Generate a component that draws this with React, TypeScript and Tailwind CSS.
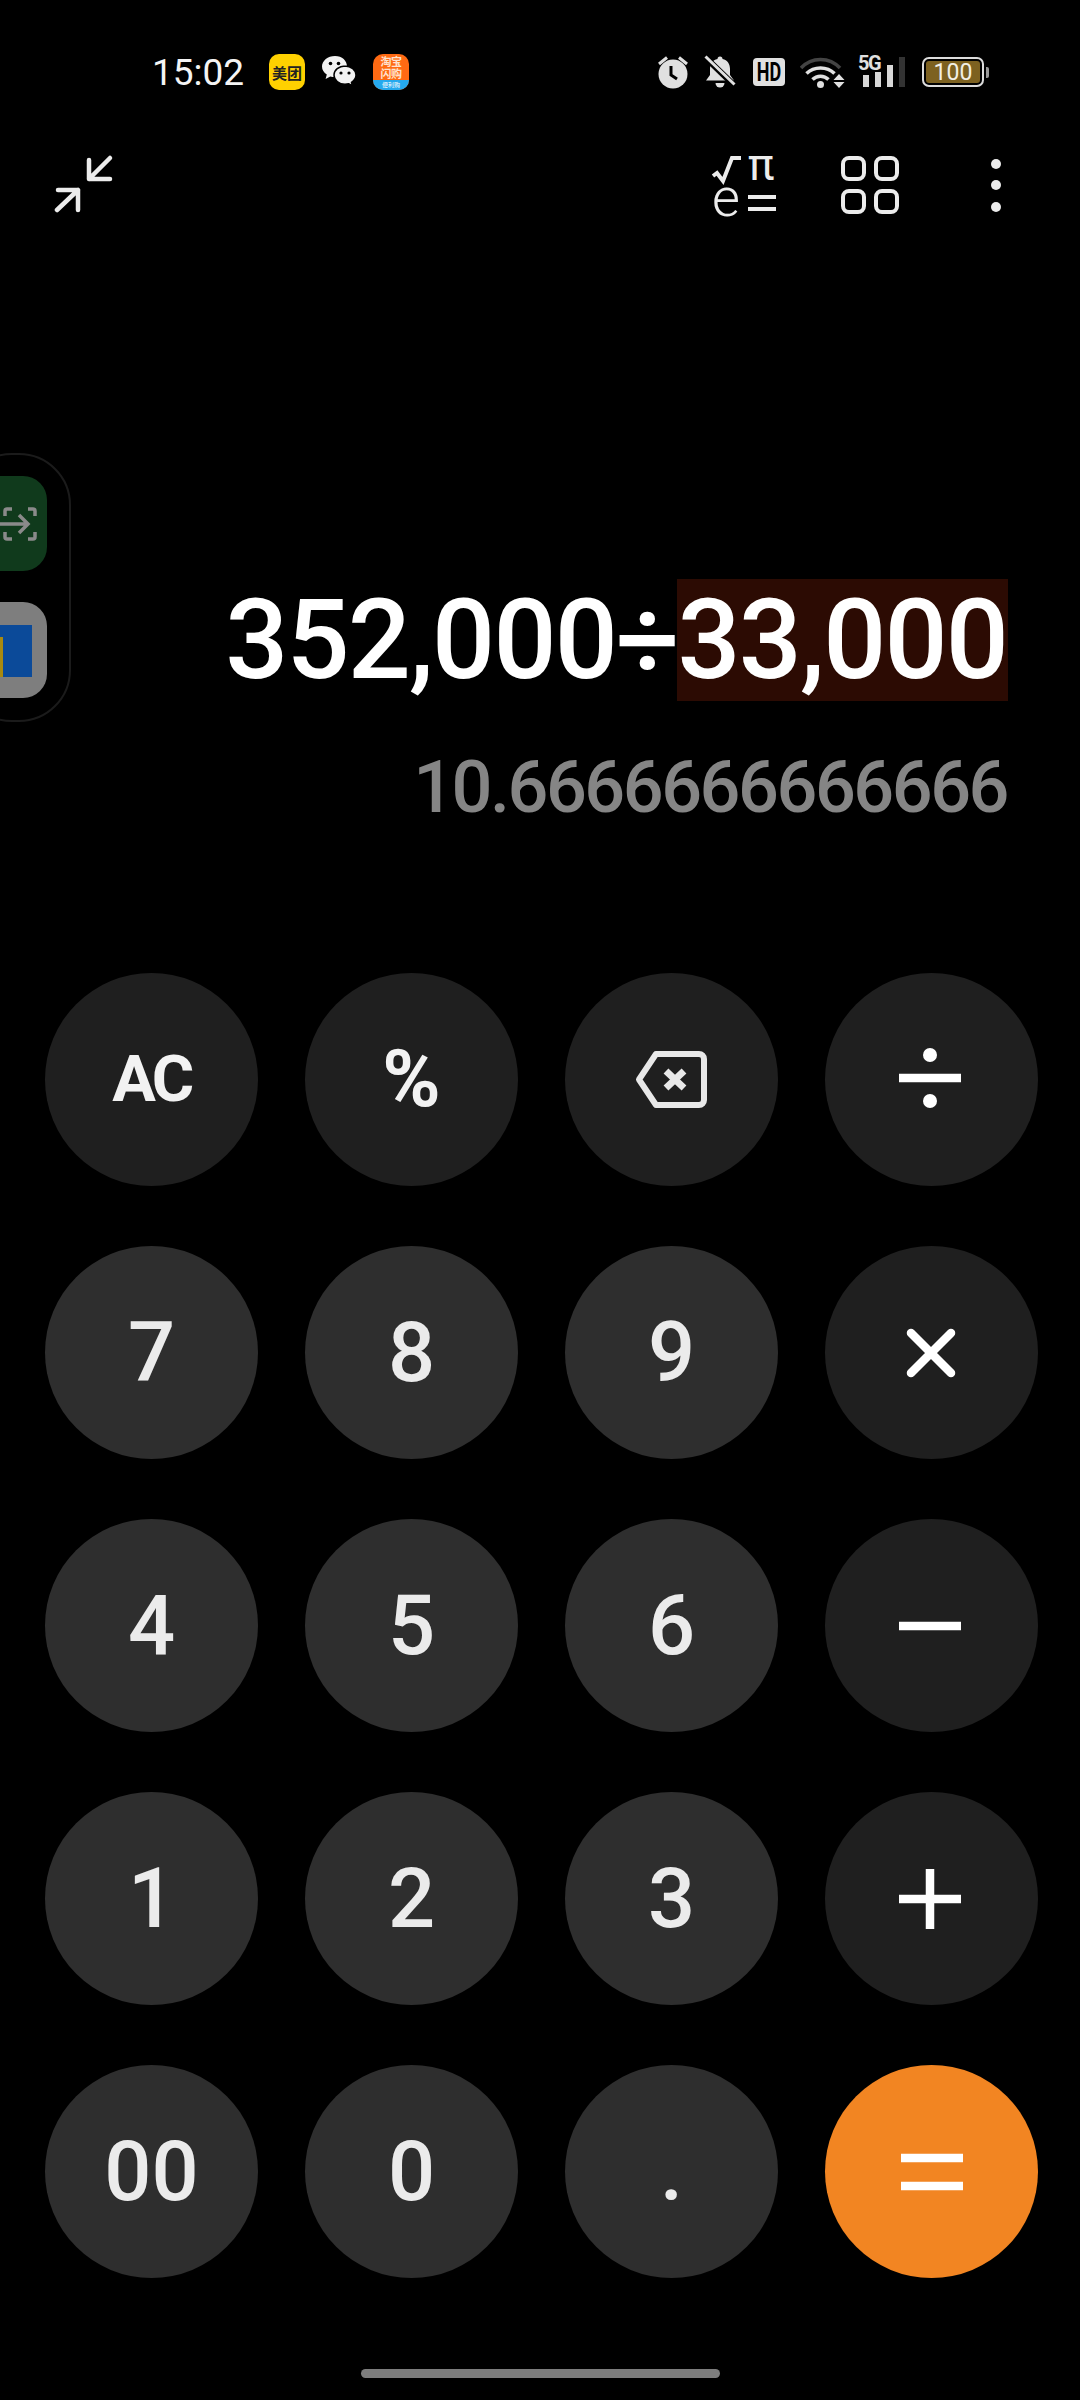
import React from "react";

const font = { fontFamily: "Roboto, 'Noto Sans CJK SC', sans-serif" };

function Meituan() {
  return (
    <div className="w-[36px] h-[36px] rounded-[10px] bg-[#ffd100] flex items-center justify-center text-[#222] text-[15px] leading-none font-bold whitespace-nowrap" style={{ fontFamily: "'Noto Sans CJK SC', sans-serif" }}>
      美团
    </div>
  );
}

function Wechat() {
  return (
    <svg width="34" height="32" viewBox="0 0 34 32" className="block">
      <path d="M13 0C5.8 0 0 4.7 0 10.5c0 3.3 1.9 6.2 4.8 8.1L3.6 23l4.7-2.6c1.5.4 3 .6 4.7.6 7.2 0 12-4.7 12-10.500C25 4.700 20.200 0 13 0z" fill="#f2f2f2" />
      <path d="M23 10c-6.100 0-11 4.100-11 9.100s4.900 9.100 11 9.100c1.300 0 2.600-.2 3.800-.5l3.700 2.300-1-3.700c2.700-1.700 4.500-4.300 4.500-7.200 0-5-4.900-9.100-11-9.100z" fill="#f2f2f2" stroke="#000" strokeWidth="1.500" />
      <circle cx="8.500" cy="7.500" r="1.800" fill="#000" />
      <circle cx="16.500" cy="7.500" r="1.800" fill="#000" />
      <circle cx="19" cy="17" r="1.600" fill="#000" />
      <circle cx="27" cy="17" r="1.600" fill="#000" />
    </svg>
  );
}

function Taobao() {
  return (
    <div className="w-[36px] h-[36px] rounded-[10px] overflow-hidden flex flex-col bg-[#ff6a13]" style={{ fontFamily: "'Noto Sans CJK SC', sans-serif" }}>
      <div className="h-[26px] flex flex-col items-center justify-center text-[#ffe3cf] text-[11px] leading-[12px] font-bold tracking-[-0.5px]">
        <span>淘宝</span>
        <span>闪购</span>
      </div>
      <div className="flex-1 bg-[#25a9ee] flex items-center justify-center text-[6px] leading-none text-white whitespace-nowrap">
        便利购
      </div>
    </div>
  );
}

function Alarm() {
  return (
    <svg width="32" height="34" viewBox="0 0 32 34" className="block">
      <circle cx="16" cy="19" r="14.500" fill="#e0e0e0" />
      <path d="M14 11v9l6 4" stroke="#000" strokeWidth="3" fill="none" />
      <path d="M2 9 10 2.500M30 9 22 2.500" stroke="#e0e0e0" strokeWidth="3" />
    </svg>
  );
}

function BellOff() {
  return (
    <svg width="32" height="34" viewBox="0 0 32 34" className="block">
      <path d="M16 1.500a2.500 2.500 0 0 1 2.500 2.500c5 1 7.500 5 7.500 10v6l4 5.500H2l4-5.500v-6c0-5 2.500-9 7.500-10A2.500 2.500 0 0 1 16 1.500z" fill="#e0e0e0" />
      <path d="M11.500 28h9a4.500 4.500 0 0 1-9 0z" fill="#e0e0e0" />
      <path d="M2 3l28 27" stroke="#000" strokeWidth="6" />
      <path d="M1.500 1.500l29 28" stroke="#e0e0e0" strokeWidth="3" />
    </svg>
  );
}

function HD() {
  return (
    <div className="w-[32px] h-[28px] rounded-[4px] bg-[#e0e0e0] flex items-center justify-center text-black text-[25px] leading-none font-bold">
      <span className="inline-block scale-x-[0.72]">HD</span>
    </div>
  );
}

function Wifi() {
  return (
    <svg width="46" height="34" viewBox="0 0 46 34" className="block">
      <path d="M1 13C11.500 1.500 29.500 1.500 40 13" stroke="#444" strokeWidth="3.500" fill="none" />
      <path d="M6.500 18.500C14 11 27 11 34.500 18.500" stroke="#e0e0e0" strokeWidth="3.500" fill="none" />
      <path d="M12.500 24.500C17 20 24 20 28.500 24.500" stroke="#e0e0e0" strokeWidth="3.500" fill="none" />
      <circle cx="20.500" cy="29.500" r="3.500" fill="#e0e0e0" />
      <path d="M39 19l5.500 6h-11zM39 33l5.500-6h-11z" fill="#e0e0e0" />
    </svg>
  );
}

function Signal() {
  return (
    <div className="relative w-[48px] h-[34px] flex items-end gap-[6px] pl-[5px] pb-[2px]">
      <div className="w-[6px] h-[12px] bg-[#d8d8d8]" />
      <div className="w-[6px] h-[15px] bg-[#d8d8d8]" />
      <div className="w-[6px] h-[22px] bg-[#d8d8d8]" />
      <div className="w-[6px] h-[30px] bg-[#333]" />
      <span className="absolute left-0 top-0 text-[#e0e0e0] text-[20px] leading-[17px] font-bold tracking-[-1.500px]">5G</span>
    </div>
  );
}

function Battery() {
  return (
    <div className="flex items-center gap-[2px]">
      <div className="w-[62px] h-[30px] rounded-[7px] border-2 border-[#dcdcdc] p-[2px] flex">
        <div className="flex-1 rounded-[3px] bg-[#7d6120] flex items-center justify-center text-[#f2efe5] text-[23px] leading-none">100</div>
      </div>
      <div className="w-[3px] h-[11px] rounded-r-[2px] bg-[#999]" />
    </div>
  );
}

function StatusBar() {
  return (
    <div className="h-[110px] pt-[34px] flex items-center pl-[152px] pr-[91px]">
      <span className="text-[37px] leading-none text-[#f4f4f4] w-[117px]">15:02</span>
      <div className="flex items-center">
        <Meituan />
        <div className="ml-[17px] mr-[17px]"><Wechat /></div>
        <Taobao />
      </div>
      <div className="flex-1" />
      <div className="flex items-center">
        <div className="mr-[15px]"><Alarm /></div>
        <div className="mr-[17px]"><BellOff /></div>
        <div className="mr-[15px]"><HD /></div>
        <div className="mr-[12px]"><Wifi /></div>
        <div className="mr-[16px]"><Signal /></div>
        <Battery />
      </div>
    </div>
  );
}

function Toolbar() {
  return (
    <div className="h-[70px] mt-[40px] ml-[54px] flex items-center relative">
      <svg width="62" height="62" viewBox="0 0 62 62" className="block">
        <g stroke="#ececec" strokeWidth="4.500" strokeLinecap="round" fill="none" strokeLinejoin="round">
          <path d="M56 4 35 25M35 6V25H56" />
          <path d="M3 56 24 36M4 36H24V56" />
        </g>
      </svg>
      <div className="flex-1" />
      <svg width="66" height="70" viewBox="0 -2 66 70" className="block mr-[61px] overflow-visible" style={font}>
        <path d="M0 24l4-3 6 8 9-23h9" stroke="#ececec" strokeWidth="4" fill="none" />
        <text x="35" y="28" fontSize="44" fill="#ececec">π</text>
        <text x="-1" y="64" fontSize="54" fontWeight="300" fill="#ececec">e</text>
        <path d="M35 45H63M35 57H63" stroke="#ececec" strokeWidth="4" />
      </svg>
      <svg width="62" height="62" viewBox="0 0 62 62" className="block mr-[89px]">
        <g stroke="#ececec" strokeWidth="4" fill="none">
          <rect x="3" y="4" width="21" height="21" rx="6" />
          <rect x="36" y="4" width="21" height="21" rx="6" />
          <rect x="3" y="37" width="21" height="21" rx="6" />
          <rect x="36" y="37" width="21" height="21" rx="6" />
        </g>
      </svg>
      <div className="flex flex-col gap-[11.500px] mr-[79px]">
        <div className="w-[10px] h-[10px] rounded-full bg-[#ececec]" />
        <div className="w-[10px] h-[10px] rounded-full bg-[#ececec]" />
        <div className="w-[10px] h-[10px] rounded-full bg-[#ececec]" />
      </div>
    </div>
  );
}

function SidePanel() {
  return (
    <div className="absolute left-[-40px] top-[453px] w-[111px] h-[269px] rounded-[52px] border-2 border-[#1b1b1b]">
      <div className="absolute right-[22px] top-[21px] w-[80px] h-[95px] rounded-[24px] bg-[#103a1c] flex items-center justify-end pr-[10px]">
        <svg width="34" height="34" viewBox="0 0 34 34" className="block overflow-visible">
          <g stroke="#8a8a8a" strokeWidth="3.500" fill="none">
            <path d="M2 9V4a2 2 0 0 1 2-2h5M25 2h5a2 2 0 0 1 2 2v5M2 25v5a2 2 0 0 0 2 2h5M25 32h5a2 2 0 0 0 2-2v-5" />
            <path d="M-8 17H25M16 8l9 9-9 9" />
          </g>
        </svg>
      </div>
      <div className="absolute right-[22px] top-[147px] w-[80px] h-[96px] rounded-[24px] bg-[#7e7e7e] overflow-hidden">
        <div className="absolute left-[8px] top-[23px] w-[57px] h-[52px] bg-[#0b4a99]" />
        <div className="absolute left-[8px] top-[35px] w-[28px] h-[40px] bg-[#a88a10]" />
      </div>
    </div>
  );
}

function Display() {
  return (
    <div className="mt-[359px] pr-[72px] flex flex-col items-end">
      <div className="h-[122px] flex items-center text-white text-[111px] font-medium leading-none tracking-[-1.800px] whitespace-nowrap">
        <span>352,000÷</span>
        <span className="h-[122px] flex items-center bg-[#2c0b03] pl-[1px] pr-[1px] -ml-[1px]">33,000</span>
      </div>
      <div className="mt-[51px] mr-[1px] text-[#858585] text-[72px] leading-[72px] font-medium tracking-[-2.500px] whitespace-nowrap">10.6666666666666</div>
    </div>
  );
}

const gray = "w-[213px] h-[213px] rounded-full bg-[#2e2e2e] flex items-center justify-center text-[#ebebeb] text-[83px] leading-none font-medium";
const dark = "w-[213px] h-[213px] rounded-full bg-[#1f1f1f] flex items-center justify-center text-white";

function Backspace() {
  return (
    <svg width="72" height="57" viewBox="0 0 72 57" className="block">
      <path d="M21 3H64a5 5 0 0 1 5 5V49a5 5 0 0 1-5 5H21L4 28.500z" stroke="#e8e8e8" strokeWidth="6" fill="none" strokeLinejoin="round" />
      <path d="M31 20 49 37M49 20 31 37" stroke="#e8e8e8" strokeWidth="7" />
    </svg>
  );
}

function OpIcon({ d, extra, round }: { d: string; extra?: React.ReactNode; round?: boolean }) {
  return (
    <svg width="64" height="64" viewBox="0 0 64 64" className="block">
      <path d={d} stroke="#fff" strokeWidth="8.500" fill="none" strokeLinecap={round ? "round" : "butt"} />
      {extra}
    </svg>
  );
}

function Keypad() {
  return (
    <div className="absolute left-[45px] top-[973px] grid grid-cols-[repeat(4,213px)] gap-x-[47px] gap-y-[60px]">
      <div className={dark}><span className="text-[65px] leading-none font-bold tracking-[-3.500px] text-[#f2f2f2]">AC</span></div>
      <div className={dark}><span className="text-[79px] leading-none font-bold text-[#f2f2f2]">%</span></div>
      <div className={dark}><div className="mr-[2px]"><Backspace /></div></div>
      <div className={dark}>
        <div className="mb-[3px] mr-[3px]">
          <OpIcon d="M1 32H63" extra={<><circle cx="32" cy="9" r="7" fill="#fff" /><circle cx="32" cy="55" r="7" fill="#fff" /></>} />
        </div>
      </div>
      <div className={gray}>7</div>
      <div className={gray}>8</div>
      <div className={gray}>9</div>
      <div className={dark}><div className="mr-[2px]"><OpIcon round d="M12 12 52 52M52 12 12 52" /></div></div>
      <div className={gray}>4</div>
      <div className={gray}>5</div>
      <div className={gray}>6</div>
      <div className={dark}><div className="mr-[3px]"><OpIcon d="M1 32H63" /></div></div>
      <div className={gray}>1</div>
      <div className={gray}>2</div>
      <div className={gray}>3</div>
      <div className={dark}><div className="mr-[3px]"><OpIcon d="M1 32H63M32 2V62" /></div></div>
      <div className={gray}>00</div>
      <div className={gray}>0</div>
      <div className={gray}>.</div>
      <div className="w-[213px] h-[213px] rounded-full bg-[#f28522] flex items-center justify-center">
        <OpIcon d="M1 18H63M1 46H63" />
      </div>
    </div>
  );
}

export default function App() {
  return (
    <div className="relative w-[1080px] h-[2400px] bg-black overflow-hidden" style={font}>
      <StatusBar />
      <Toolbar />
      <SidePanel />
      <Display />
      <Keypad />
      <div className="absolute left-[361px] top-[2369px] w-[359px] h-[9px] rounded-full bg-[#7d7d7d]" />
    </div>
  );
}
